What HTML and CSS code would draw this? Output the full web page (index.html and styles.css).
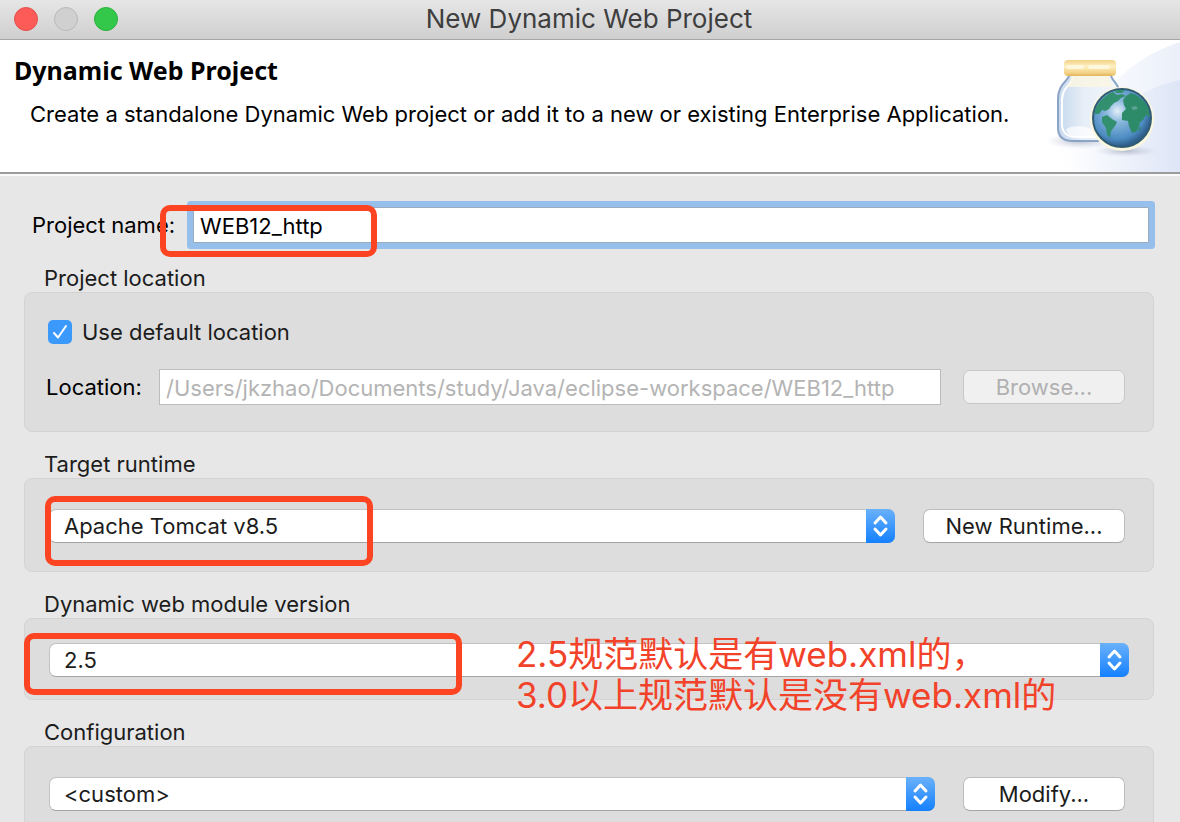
FILE: index.html
```
<!DOCTYPE html>
<html lang="en">

  <head>
    <meta charset="UTF-8">
    <title>New Dynamic Web Project</title>
    <link rel="stylesheet" href="styles.css">
  </head>

  <body>
    <div class="window">
      <div class="titlebar">
        <div class="lights">
          <button type="button" class="light red" aria-label="Close"></button>
          <button type="button" class="light gray" aria-label="Minimize" disabled></button>
          <button type="button" class="light green" aria-label="Zoom"></button>
        </div>
        <div class="caption">New Dynamic Web Project</div>
      </div>

      <header class="banner">
        <div class="intro">
          <h1>Dynamic Web Project</h1>
          <p>Create a standalone Dynamic Web project or add it to a new or existing Enterprise Application.</p>
        </div>
        <svg class="art" viewBox="0 0 150 132" aria-hidden="true">
          <defs>
            <linearGradient id="sky" x1="0" y1="0" x2="1" y2="0">
              <stop offset="0.1" stop-color="#e4eaf8" stop-opacity="0" />
              <stop offset="1" stop-color="#d5dff4" />
            </linearGradient>
            <linearGradient id="lid" x1="0" y1="0" x2="0" y2="1">
              <stop offset="0" stop-color="#f4d285" />
              <stop offset="0.4" stop-color="#fdf0c4" />
              <stop offset="0.6" stop-color="#f9e2a4" />
              <stop offset="1" stop-color="#edc169" />
            </linearGradient>
            <linearGradient id="glass" x1="0" y1="0" x2="1" y2="0">
              <stop offset="0" stop-color="#c6d8ee" />
              <stop offset="0.4" stop-color="#e6eef7" />
              <stop offset="1" stop-color="#f4f7fb" />
            </linearGradient>
            <radialGradient id="sea" cx="0.42" cy="0.38" r="0.6">
              <stop offset="0" stop-color="#e4eff9" />
              <stop offset="0.3" stop-color="#8dbade" />
              <stop offset="0.8" stop-color="#4c8bc2" />
              <stop offset="1" stop-color="#2f608c" />
            </radialGradient>
            <radialGradient id="shade">
              <stop offset="0" stop-color="#9aa3b8" stop-opacity="0.7" />
              <stop offset="1" stop-color="#c3cbdc" stop-opacity="0" />
            </radialGradient>
          </defs>
          <path d="M150 2C120 12 98 26 72 56C50 82 28 112 10 132H150Z" fill="url(#sky)" opacity="0.5" />
          <path d="M150 40C112 48 70 74 28 132H150Z" fill="url(#sky)" opacity="0.6" />
          <ellipse cx="50" cy="101" rx="34" ry="8" fill="url(#shade)" />
          <ellipse cx="96" cy="111" rx="32" ry="6" fill="url(#shade)" />
          <path d="M39 35C39 41 28 43 28 59V88C28 97 34 101 43 101H78C86 101 91 97 91 90V59C91 44 81 41 81 35Z" fill="url(#glass)" stroke="#8ba3c4" stroke-width="2" />
          <path d="M43 37C42 45 32 47 32 60V86C33 94 39 97 47 97H76" fill="none" stroke="#fff" stroke-width="2" />
          <path d="M41 36H79C79 42 82 44 84 47H36C40 44 41 41 41 36Z" fill="#fbf6e2" opacity="0.8" />
          <path d="M36 89C45 84 60 86 70 94L62 97H46C39 96 37 93 36 89Z" fill="#fff" opacity="0.7" />
          <rect x="34" y="20" width="52" height="16" rx="4" fill="url(#lid)" />
          <path d="M38 27H52M60 27H78" stroke="#fffbe8" stroke-width="4" stroke-linecap="round" opacity="0.8" />
          <path d="M38 35H82" stroke="#e0b35c" stroke-width="1" />
          <circle cx="92" cy="79" r="32" fill="#faf7df" />
          <circle cx="92" cy="78" r="29" fill="url(#sea)" stroke="#315b73" stroke-width="2" />
          <path d="M65 70C68 62 75 55 83 52L87 55L92 54L96 56L91 58L88 61L84 63L81 66L79 69L75 71L72 70L69 74L65 74Z" fill="#32906f" />
          <path d="M72 77L77 75L82 79L87 82L85 86L81 91L80 98L77 95L76 88L72 82Z" fill="#32906f" />
          <path d="M93 60L96 56L101 53C108 55 114 60 118 67L120 77L116 75L113 80L110 82L109 87L106 92L102 93L99 86L98 81L92 80L92 73L96 69L94 65Z" fill="#2d8b69" />
          <path d="M108 90L111 86L110 91Z" fill="#2d8b69" />
          <path d="M85 50L95 50L92 53L86 53Z" fill="#32906f" />
          <path d="M101 67L106 66L108 69L103 70Z" fill="#5ba393" />
        </svg>
      </header>

      <form class="content">
        <div class="name-row">
          <label for="name">Project name:</label>
          <input type="text" id="name" value="WEB12_http">
          <span class="mark mark-name"></span>
        </div>

        <section class="group">
          <h2>Project location</h2>
          <div class="panel location">
            <label class="check">
              <input type="checkbox" checked>
              <svg viewBox="0 0 24 24" aria-hidden="true"><path d="M6 13L10 17.500L18 6" /></svg>
              Use default location
            </label>
            <div class="row">
              <label for="path">Location:</label>
              <input type="text" id="path" value="/Users/jkzhao/Documents/study/Java/eclipse-workspace/WEB12_http" disabled>
              <button type="button" class="btn" disabled>Browse...</button>
            </div>
          </div>
        </section>

        <section class="group">
          <h2><label for="runtime">Target runtime</label></h2>
          <div class="panel runtime">
            <div class="row">
              <div class="select">
                <select id="runtime"><option>Apache Tomcat v8.5</option></select>
                <svg class="arrows" viewBox="0 0 29 34" aria-hidden="true"><path d="M9 14L14.500 8L20 14M9 20L14.500 26L20 20" /></svg>
              </div>
              <button type="button" class="btn wide">New Runtime...</button>
            </div>
            <span class="mark mark-runtime"></span>
          </div>
        </section>

        <section class="group">
          <h2><label for="version">Dynamic web module version</label></h2>
          <div class="panel version">
            <div class="select">
              <select id="version"><option>2.5</option></select>
              <svg class="arrows" viewBox="0 0 29 34" aria-hidden="true"><path d="M9 14L14.500 8L20 14M9 20L14.500 26L20 20" /></svg>
            </div>
            <span class="mark mark-version"></span>
            <p class="note" lang="zh-CN">2.5规范默认是有web.xml的，<br>3.0以上规范默认是没有web.xml的</p>
          </div>
        </section>

        <section class="group">
          <h2><label for="config">Configuration</label></h2>
          <div class="panel config">
            <div class="row">
              <div class="select">
                <select id="config"><option>&lt;custom&gt;</option></select>
                <svg class="arrows" viewBox="0 0 29 34" aria-hidden="true"><path d="M9 14L14.500 8L20 14M9 20L14.500 26L20 20" /></svg>
              </div>
              <button type="button" class="btn">Modify...</button>
            </div>
          </div>
        </section>
      </form>
    </div>
  </body>

</html>
```
FILE: styles.css
```
* {
  margin: 0;
  padding: 0;
  box-sizing: border-box;
}

body {
  background: #e7e7e7;
  color: #1c1c1c;
  font-family: Inter, "Noto Sans CJK SC", sans-serif;
  font-size: 22px;
  line-height: 28px;
}

input,
select,
button {
  font: inherit;
  color: inherit;
}

.window {
  height: 100vh;
  overflow: hidden;
}

/* title bar */
.titlebar {
  display: grid;
  grid-template-columns: 1fr auto 1fr;
  align-items: center;
  height: 40px;
  padding: 0 16px 2px 14px;
  background: linear-gradient(#e6e6e6, #cfcfcf);
  border-bottom: 1px solid #a6a6a6;
}

.lights {
  display: flex;
  gap: 16px;
}

.light {
  width: 24px;
  height: 24px;
  border: 1px solid;
  border-radius: 50%;
}

.red {
  background: #fc5b57;
  border-color: #e2504c;
}

.gray {
  background: #d0d0d0;
  border-color: #b9b9b9;
}

.green {
  background: #34c84a;
  border-color: #2bb03d;
}

.caption {
  color: #3e3e3e;
  font-size: 26px;
}

/* banner */
.banner {
  display: flex;
  justify-content: space-between;
  height: 136px;
  background: #fff;
  border-bottom: 2px solid #fafafa;
  box-shadow: inset 0 -2px #9c9c9c;
}

.intro {
  padding: 14px 0 0 14px;
  color: #000;
  white-space: nowrap;
}

.intro h1 {
  font-family: "Noto Sans", sans-serif;
  font-size: 25px;
  line-height: 32px;
}

.intro p {
  padding: 14px 0 0 16px;
}

.art {
  flex: none;
  width: 150px;
  height: 132px;
}

/* form */
.content {
  padding: 31px 26px 0 24px;
}

.name-row {
  position: relative;
  display: flex;
  align-items: center;
  gap: 18px;
  padding: 0 5px 0 8px;
  margin-bottom: 21px;
  color: #000;
}

.name-row input {
  flex: 1;
  min-width: 0;
  height: 36px;
  padding: 2px 6px 0;
  border: 1px solid #9aabbd;
  border-radius: 1px;
  box-shadow: 0 0 0 6px #97bfeb;
  outline: none;
  background: #fff;
}

.group {
  margin-bottom: 18px;
}

.group h2 {
  padding-left: 20px;
  font-size: 22px;
  font-weight: 400;
}

.panel {
  position: relative;
  border: 1px solid #d3d3d3;
  border-radius: 8px;
  background: #dddddd;
}

.row {
  display: flex;
  align-items: center;
  gap: 28px;
}

.location {
  padding: 27px 28px 26px 21px;
}

.location .row {
  gap: 22px;
  color: #000;
}

.location .row label {
  width: 91px;
}

.location .row input {
  flex: 1;
  min-width: 0;
  height: 36px;
  padding: 2px 6px 0;
  border: 1px solid #bcbcbc;
  background: #fff;
  color: #b4b4b4;
}

.check {
  position: relative;
  display: flex;
  align-items: center;
  gap: 10px;
  height: 24px;
  margin: 0 0 25px 2px;
}

.check input {
  appearance: none;
  width: 24px;
  height: 24px;
  border-radius: 5px;
  background: #3b99fc;
}

.check svg {
  position: absolute;
  left: 0;
  top: 0;
  width: 24px;
  height: 24px;
  fill: none;
  stroke: #fff;
  stroke-width: 2;
  stroke-linecap: round;
  stroke-linejoin: round;
}

.btn {
  flex: none;
  width: 162px;
  height: 34px;
  border: 1px solid #bdbdbd;
  border-bottom-color: #a5a5a5;
  border-radius: 7px;
  background: #fff;
}

.btn.wide {
  width: 202px;
}

.btn:disabled {
  border-color: #c8c8c8;
  background: #f0f0f0;
  color: #b0b0b0;
}

.runtime {
  padding: 30px 28px 28px 24px;
}

.version {
  padding: 24px 24px 22px;
}

.config {
  padding: 30px 28px 28px 24px;
}

.select {
  position: relative;
  flex: 1;
  height: 34px;
}

.select select {
  appearance: none;
  display: block;
  width: 100%;
  height: 34px;
  padding: 0 40px 0 14px;
  border: 1px solid #c2c2c2;
  border-bottom-color: #a5a5a5;
  border-radius: 7px;
  background: #fff;
}

.arrows {
  position: absolute;
  right: 0;
  top: 0;
  width: 29px;
  height: 34px;
  border-radius: 0 7px 7px 0;
  background: linear-gradient(#69b1fa, #1480ff);
  fill: none;
  stroke: #fff;
  stroke-width: 3;
  stroke-linecap: round;
  stroke-linejoin: round;
  pointer-events: none;
}

/* red annotations over the form */
.mark {
  position: absolute;
  border: 6px solid #fc4422;
  border-radius: 10px;
  pointer-events: none;
}

.mark-name {
  left: 136px;
  top: -2px;
  width: 217px;
  height: 52px;
}

.mark-runtime {
  left: 20px;
  top: 17px;
  width: 328px;
  height: 70px;
}

.mark-version {
  left: -1px;
  top: 14px;
  width: 438px;
  height: 62px;
}

.note {
  position: absolute;
  left: 491px;
  top: 15px;
  z-index: 1;
  color: #f2432a;
  font-size: 35px;
  line-height: 41px;
  white-space: nowrap;
}
```
